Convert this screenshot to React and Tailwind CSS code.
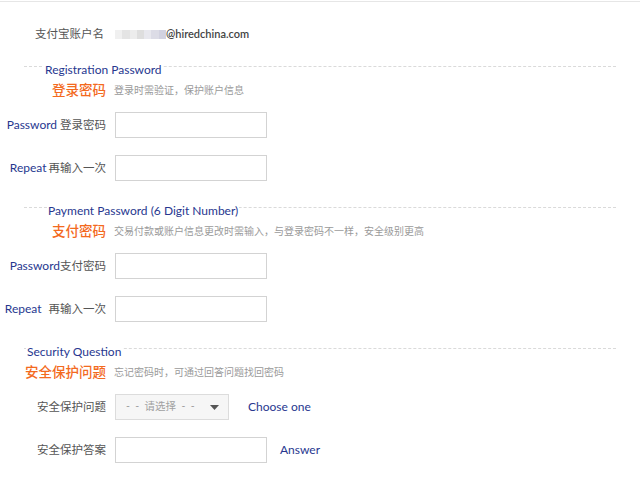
const NAVY = "text-[#27378f]";

function Box({ w = "w-[152px]" }) {
  return <input readOnly className={`${w} h-[26px] border border-[#d3d3d3] bg-white outline-none`} />;
}

function Row({ label, children, first }) {
  return (
    <div className={`flex h-[26px] items-center ${first ? "mt-[13px]" : "mt-[17px]"}`}>
      <div className="flex w-[106px] shrink-0 justify-end whitespace-nowrap text-[11.5px] text-[#555]">{label}</div>
      <div className="ml-[9px] flex items-center">{children}</div>
    </div>
  );
}

function Section({ en, enLeft, title, desc, children, top }) {
  return (
    <section className={top}>
      <div className="mx-[24px] border-t border-dashed border-[#dadada]" />
      <div className="-mt-[6px] h-[14px] leading-[14px]">
        <span className={`${enLeft} bg-white px-px text-[12px] ${NAVY}`}>{en}</span>
      </div>
      <div className="mt-[6px] flex h-[18px] items-center">
        <div className="w-[106px] shrink-0 whitespace-nowrap text-right text-[13.5px] font-medium text-[#f36a1e]">{title}</div>
        <div className="ml-[8px] whitespace-nowrap text-[10px] text-[#9a9a9a]">{desc}</div>
      </div>
      {children}
    </section>
  );
}

function Blurred() {
  const shades = ["#f0f0f0", "#e4e4e4", "#ececec", "#dedede", "#e8e8ee", "#dcdce6", "#d2d2e0"];
  return (
    <span className="flex h-[9px] w-[51px] blur-[0.6px]">
      {shades.map((c, i) => (
        <span key={i} className="h-full flex-1" style={{ background: c }} />
      ))}
    </span>
  );
}

export default function App() {
  return (
    <div className="h-[483px] w-[640px] overflow-hidden bg-white pt-px font-[Lato,'Noto_Sans_CJK_SC',sans-serif]">
      <div className="border-t border-[#e6e6e6]">
        <div className="mt-[22px] flex h-[20px] items-center">
          <div className="w-[104px] shrink-0 text-right text-[11.5px] text-[#555]">支付宝账户名</div>
          <div className="ml-[11px] flex items-center">
            <Blurred />
            <span className="text-[11px] font-semibold text-[#444]">@hiredchina.com</span>
          </div>
        </div>

        <Section
          top="mt-[22px]"
          en="Registration Password"
          enLeft="ml-[44px]"
          title="登录密码"
          desc="登录时需验证，保护账户信息"
        >
          <Row first label={<><span className={`text-[12px] ${NAVY}`}>Password</span><span>&nbsp;登录密码</span></>}>
            <Box />
          </Row>
          <Row label={<><span className={`text-[12px] ${NAVY}`}>Repeat</span><span className="ml-[2px]">再输入一次</span></>}>
            <Box />
          </Row>
        </Section>

        <Section
          top="mt-[26px]"
          en="Payment Password (6 Digit Number)"
          enLeft="ml-[47px]"
          title="支付密码"
          desc="交易付款或账户信息更改时需输入，与登录密码不一样，安全级别更高"
        >
          <Row first label={<><span className={`text-[12px] ${NAVY}`}>Password</span><span>支付密码</span></>}>
            <Box />
          </Row>
          <Row label={<><span className={`text-[12px] ${NAVY}`}>Repeat</span><span className="ml-[7px]">再输入一次</span></>}>
            <Box />
          </Row>
        </Section>

        <Section
          top="mt-[26px]"
          en="Security Question"
          enLeft="ml-[26px]"
          title="安全保护问题"
          desc="忘记密码时，可通过回答问题找回密码"
        >
          <Row first label="安全保护问题">
            <div className="flex h-[26px] w-[114px] items-center border border-[#dcdcdc] bg-[#f6f6f6] pl-[10px] pr-[9px]">
              <span className="flex-1 whitespace-pre text-[10.5px] text-[#a0a0a0]">-  -  请选择  -  -</span>
              <svg width="9" height="5" viewBox="0 0 9 5">
                <path d="M0 0h9L4.5 5z" fill="#555" />
              </svg>
            </div>
            <span className={`ml-[19px] text-[12px] ${NAVY}`}>Choose one</span>
          </Row>
          <Row label="安全保护答案">
            <Box />
            <span className={`ml-[13px] text-[12px] ${NAVY}`}>Answer</span>
          </Row>
        </Section>
      </div>
    </div>
  );
}
